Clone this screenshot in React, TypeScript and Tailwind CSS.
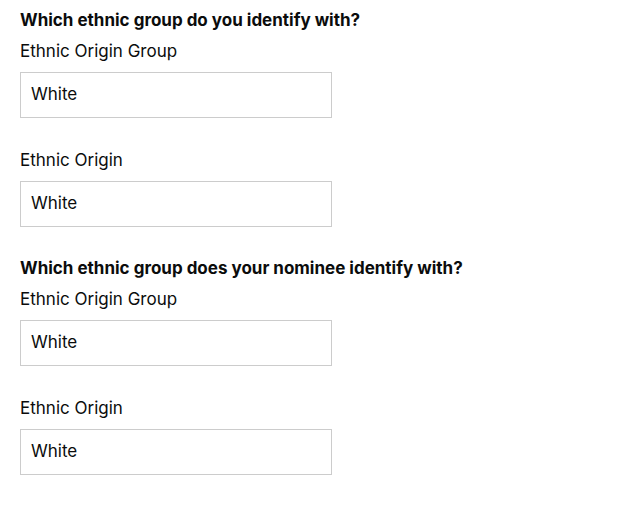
import React from "react";

const font = { fontFamily: "Inter, 'Noto Sans', Arial, sans-serif" };

function Field({ label, value, first }: { label: string; value: string; first?: boolean }) {
  return (
    <div className={first ? "mt-[7px]" : "mt-[30px]"}>
      <div className="text-[17px] leading-[24px] text-[#0b0c0c]">{label}</div>
      <div className="mt-[9px] w-[312px] h-[46px] border border-[#cccccc] bg-white flex items-center px-[10px] text-[17px] text-[#0b0c0c]">
        {value}
      </div>
    </div>
  );
}

function Section({ title, className }: { title: string; className?: string }) {
  return (
    <div className={className}>
      <div className="text-[17px] leading-[24px] font-bold text-[#0b0c0c]">{title}</div>
      <Field label="Ethnic Origin Group" value="White" first />
      <Field label="Ethnic Origin" value="White" />
    </div>
  );
}

export default function App() {
  return (
    <div className="w-[620px] h-[508px] bg-white pl-[20px] pt-[8px]" style={font}>
      <Section title="Which ethnic group do you identify with?" />
      <Section title="Which ethnic group does your nominee identify with?" className="mt-[29px]" />
    </div>
  );
}
